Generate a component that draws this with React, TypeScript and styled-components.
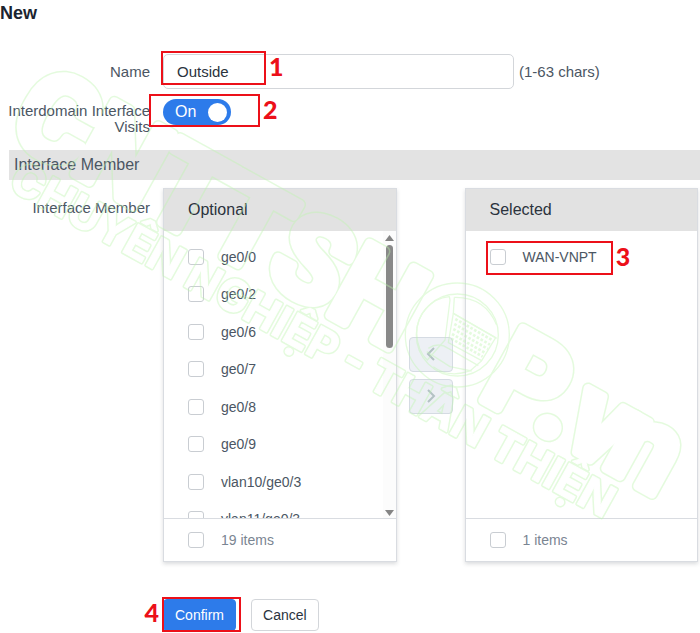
import { useState } from "react";
import styled, { createGlobalStyle } from "styled-components";

const GlobalStyle = createGlobalStyle`
  *, *::before, *::after { box-sizing: border-box; }
  body {
    margin: 0;
    background: #fff;
    color: #4b5663;
    font: 15px/20px "Liberation Sans", Arial, sans-serif;
  }
  button, input { font: inherit; }
`;

const Page = styled.main`
  position: relative;
  overflow: hidden;
  padding: 2px 0;
`;

const Title = styled.h1`
  margin: 0 0 30px;
  color: #1b2430;
  font-size: 18px;
  line-height: 22px;
`;

const FormRow = styled.div<{ $gap: number; $align?: string }>`
  display: grid;
  grid-template-columns: 150px 1fr;
  column-gap: 13px;
  align-items: ${(p) => p.$align ?? "center"};
  margin-bottom: ${(p) => p.$gap}px;
`;

const Label = styled.label<{ $top?: number }>`
  padding-top: ${(p) => p.$top ?? 0}px;
  line-height: 16px;
  text-align: right;
`;

const GroupLabel = styled.span`
  padding-top: 10px;
  text-align: right;
`;

const Field = styled.div`
  display: flex;
  align-items: center;
  gap: 5px;
`;

const Marked = styled.div`
  position: relative;
  display: flex;
`;

const Mark = styled.span<{ $inset: string }>`
  position: absolute;
  inset: ${(p) => p.$inset};
  z-index: 2;
  border: 2px solid #ec1019;
  pointer-events: none;
`;

const Step = styled.span<{ $side?: "left" | "right" }>`
  position: absolute;
  top: 0;
  ${(p) => (p.$side === "left" ? "right" : "left")}: 100%;
  margin: 0 5px;
  color: #ec1019;
  font: 900 25px/26px Lato, sans-serif;
`;

const TextInput = styled.input`
  width: 351px;
  height: 35px;
  padding: 0 13px;
  border: 1px solid #d3d6da;
  border-radius: 5px;
  background: #fff;
  color: #2b333d;
`;

const Switch = styled.button<{ $on: boolean }>`
  display: flex;
  flex-direction: ${(p) => (p.$on ? "row" : "row-reverse")};
  align-items: center;
  justify-content: space-between;
  width: 68px;
  height: 26px;
  padding: 0 4px 0 12px;
  border: 0;
  border-radius: 13px;
  background: ${(p) => (p.$on ? "#2d7bea" : "#b5bac1")};
  color: #fff;
  font-size: 16px;
`;

const Knob = styled.span`
  width: 19px;
  height: 19px;
  border-radius: 50%;
  background: #fff;
`;

const SectionTitle = styled.h2`
  margin: 0 0 8px 9px;
  padding: 5px;
  background: #e3e3e3;
  font-size: 16px;
  font-weight: 400;
  line-height: 20px;
`;

const Transfer = styled.div`
  display: grid;
  grid-template-columns: 1fr 44px 1fr;
  column-gap: 12px;
  align-items: center;
  margin-right: 2px;
`;

const Panel = styled.section`
  display: flex;
  flex-direction: column;
  border: 1px solid #d9dce1;
  background: #fff;
  box-shadow: 0 2px 4px rgba(30, 40, 50, 0.16);
`;

const PanelHead = styled.h3`
  margin: 0;
  padding: 11px 24px;
  background: #e2e2e2;
  color: #2b333d;
  font-size: 16px;
  font-weight: 400;
  line-height: 20px;
`;

const PanelBody = styled.div`
  display: flex;
  height: 288px;
  border-bottom: 1px solid #d9dce1;
`;

const List = styled.ul`
  flex: 1;
  margin: 0;
  padding: 7px 0 0 24px;
  overflow: hidden;
  list-style: none;
`;

const Item = styled.li`
  display: flex;
  align-items: center;
  height: 37px;

  &:nth-child(even) { height: 38px; }
`;

const Option = styled.label<{ $muted?: boolean }>`
  position: relative;
  display: flex;
  align-items: center;
  gap: 17px;
  color: ${(p) => (p.$muted ? "#7a8592" : "inherit")};
  font-size: 14px;
`;

const Checkbox = styled.input`
  appearance: none;
  width: 16px;
  height: 16px;
  margin: 0;
  border: 1px solid #c9cdd2;
  border-radius: 3px;
  background: #fff;

  &:checked { background: #2d7bea; }
`;

const PanelFoot = styled.div`
  padding: 11px 24px;
`;

const Scrollbar = styled.div`
  display: flex;
  flex-direction: column;
  align-items: center;
  width: 13px;
  padding: 4px 0 2px;
  background: #fcfcfc;
`;

const Thumb = styled.div`
  width: 7px;
  height: 103px;
  margin: 4px 0 auto;
  border-radius: 4px;
  background: #888;
`;

const MoveButtons = styled.div`
  display: flex;
  flex-direction: column;
  gap: 7px;
`;

const MoveButton = styled.button`
  display: flex;
  align-items: center;
  justify-content: center;
  height: 35px;
  padding: 0;
  border: 1px solid #d5dbe3;
  border-radius: 4px;
  background: #edf0f5;
`;

const Actions = styled.div`
  display: flex;
  gap: 15px;
  padding: 37px 0 0 163px;
`;

const Button = styled.button<{ $primary?: boolean }>`
  height: 32px;
  padding: 0 11px;
  border: 1px solid ${(p) => (p.$primary ? "#2d7bea" : "#d3d6da")};
  border-radius: 4px;
  background: ${(p) => (p.$primary ? "#2d7bea" : "#fff")};
  color: ${(p) => (p.$primary ? "#fff" : "#2b333d")};
  font-size: 14px;
`;

const WatermarkSvg = styled.svg`
  position: absolute;
  top: 0;
  left: 0;
  z-index: 1;
  width: 700px;
  height: 633px;
  opacity: 0.4;
  pointer-events: none;
`;

const Arrow = ({ d }: { d: string }) => (
  <svg width="9" height="6" viewBox="0 0 9 6" aria-hidden="true">
    <path d={d} fill="#858585" />
  </svg>
);

const Chevron = ({ d }: { d: string }) => (
  <svg width="10" height="16" viewBox="0 0 10 16" fill="none" stroke="#b3c2c4" strokeWidth="2" aria-hidden="true">
    <path d={d} />
  </svg>
);

const brandLetters: [string, number][] = [
  ["C", 70], ["N", 142], ["T", 222], ["T", 292], ["S", 364], ["H", 434], ["P", 609], [".", 670], ["v", 702], ["n", 751],
];

const Lettering = ({ brand, slogan }: { brand: number; slogan: number }) => (
  <g transform="rotate(29)" strokeLinejoin="round">
    <g strokeWidth={brand} fontFamily="Roboto, sans-serif" fontWeight="700" fontSize="116">
      {brandLetters.map(([letter, x]) => (
        <text key={x} x={x} y="116">{letter}</text>
      ))}
    </g>
    <text x="97" y="161" strokeWidth={slogan} fontFamily="Inter, sans-serif" fontWeight="700" fontSize="44">
      CHUYÊN NGHIỆP - THÂN THIỆN
    </text>
  </g>
);

const Watermark = () => (
  <WatermarkSvg viewBox="0 0 700 633" aria-hidden="true">
    <mask id="hollow" maskUnits="userSpaceOnUse" x="0" y="0" width="700" height="633">
      <rect width="700" height="633" fill="#fff" />
      <g fill="#000" stroke="#000"><Lettering brand={9} slogan={1} /></g>
    </mask>
    <g fill="#bdf5ad" stroke="#bdf5ad" mask="url(#hollow)"><Lettering brand={12} slogan={4} /></g>
    <g transform="translate(400 270) scale(0.3333)" fill="none" stroke="#bdf5ad" strokeWidth="4" strokeLinejoin="round">
      <circle cx="172" cy="195" r="156" />
      <circle cx="172" cy="195" r="123" />
      <path d="M148 80C90 85 50 135 50 190C50 225 65 255 82 270L135 210L150 90Z" />
      <path d="M163 82L160 130L290 205M163 82Q255 80 290 165" />
      <path d="M160 130L287 203L245 272L145 218Z" />
      <path d="M166 147L276 210M163 162L270 224M160 177L264 237M156 192L256 249M154 206L248 260" strokeWidth="8" strokeDasharray="8 5" />
      <path d="M85 235Q115 215 145 235L235 287M80 245L150 290L215 303M100 290Q145 325 210 303L245 272" />
    </g>
  </WatermarkSvg>
);

const optional = ["ge0/0", "ge0/2", "ge0/6", "ge0/7", "ge0/8", "ge0/9", "vlan10/ge0/3", "vlan11/ge0/3"];

export default function App() {
  const [name, setName] = useState("Outside");
  const [visits, setVisits] = useState(true);

  return (
    <Page>
      <GlobalStyle />
      <Title>New</Title>
      <FormRow $gap={10}>
        <Label htmlFor="name">Name</Label>
        <Field>
          <Marked>
            <TextInput id="name" value={name} onChange={(e) => setName(e.target.value)} />
            <Mark $inset="-3px 248px 4px -2px"><Step>1</Step></Mark>
          </Marked>
          <span>(1-63 chars)</span>
        </Field>
      </FormRow>
      <FormRow $gap={15} $align="start">
        <Label htmlFor="visits" $top={4}>Interdomain Interface Visits</Label>
        <Field>
          <Marked>
            <Switch id="visits" type="button" role="switch" aria-checked={visits} $on={visits} onClick={() => setVisits(!visits)}>
              {visits ? "On" : "Off"}
              <Knob />
            </Switch>
            <Mark $inset="-5px -29px -2px -14px"><Step>2</Step></Mark>
          </Marked>
        </Field>
      </FormRow>
      <SectionTitle>Interface Member</SectionTitle>
      <FormRow $gap={0} $align="start">
        <GroupLabel>Interface Member</GroupLabel>
        <Transfer>
          <Panel>
            <PanelHead>Optional</PanelHead>
            <PanelBody>
              <List>
                {optional.map((item) => (
                  <Item key={item}><Option><Checkbox type="checkbox" />{item}</Option></Item>
                ))}
              </List>
              <Scrollbar>
                <Arrow d="M4.5 0L9 6H0Z" />
                <Thumb />
                <Arrow d="M0 0H9L4.5 6Z" />
              </Scrollbar>
            </PanelBody>
            <PanelFoot><Option $muted><Checkbox type="checkbox" />19 items</Option></PanelFoot>
          </Panel>
          <MoveButtons>
            <MoveButton type="button" aria-label="Move to optional"><Chevron d="M8 2L2 8L8 14" /></MoveButton>
            <MoveButton type="button" aria-label="Move to selected"><Chevron d="M2 2L8 8L2 14" /></MoveButton>
          </MoveButtons>
          <Panel>
            <PanelHead>Selected</PanelHead>
            <PanelBody>
              <List>
                <Item>
                  <Option>
                    <Checkbox type="checkbox" />WAN-VNPT
                    <Mark $inset="-6px -16px -8px -4px"><Step>3</Step></Mark>
                  </Option>
                </Item>
              </List>
            </PanelBody>
            <PanelFoot><Option $muted><Checkbox type="checkbox" />1 items</Option></PanelFoot>
          </Panel>
        </Transfer>
      </FormRow>
      <Actions>
        <Marked>
          <Button type="button" $primary>Confirm</Button>
          <Mark $inset="-2px -5px -1px -1px"><Step $side="left">4</Step></Mark>
        </Marked>
        <Button type="button">Cancel</Button>
      </Actions>
      <Watermark />
    </Page>
  );
}
